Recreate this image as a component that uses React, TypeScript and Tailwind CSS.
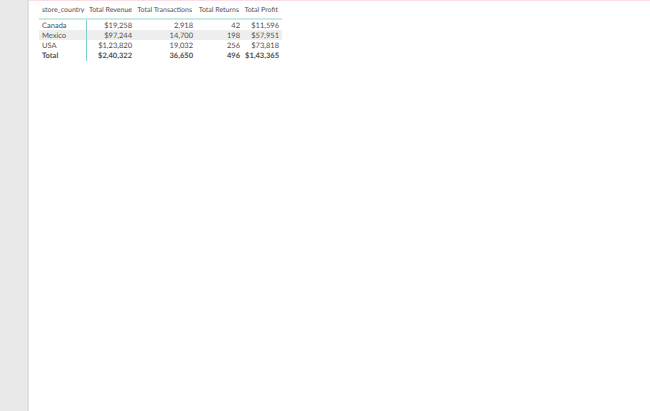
const rows = [
  { country: "Canada", revenue: "$19,258", transactions: "2,918", returns: "42", profit: "$11,596" },
  { country: "Mexico", revenue: "$97,244", transactions: "14,700", returns: "198", profit: "$57,951" },
  { country: "USA", revenue: "$1,23,820", transactions: "19,032", returns: "256", profit: "$73,818" },
];

const colsClass = "grid grid-cols-[48px_49px_60px_47px_39px]";

const App = () => {
  return (
    <div className="flex h-[411px] w-[650px] overflow-hidden bg-white font-['Lato',sans-serif] text-[7.5px] text-[#505050] [text-rendering:geometricPrecision]">
      <div className="h-full w-[29px] shrink-0 border-r-2 border-r-[#e0e0e0] bg-[#e9e9e9]" />
      <div className="flex-1">
        <div className="h-px bg-[#fbdde6]" />
        <div className="ml-[10px] mt-[3px] w-[243px]">
          <div className={`${colsClass} h-[14px] items-center whitespace-nowrap border-b-2 border-b-[#c9ebe6] box-content text-[7px]`}>
            <div className="mb-[1px] pl-[3px]">store_country</div>
            <div className="mb-[1px] pr-[4px] text-right">Total Revenue</div>
            <div className="mb-[1px] pr-[4px] text-right">Total Transactions</div>
            <div className="mb-[1px] pr-[4px] text-right">Total Returns</div>
            <div className="mb-[1px] pr-[4px] text-right">Total Profit</div>
          </div>
          {rows.map((row) => (
            <div
              key={row.country}
              className={`${colsClass} h-[10px] items-center ${row.country === "Mexico" ? "bg-[#eeeeee]" : ""}`}
            >
              <div className="flex h-full items-center border-r border-r-[#7fd0c8] pl-[3px]">{row.country}</div>
              <div className="pr-[4px] text-right">{row.revenue}</div>
              <div className="pr-[3px] text-right">{row.transactions}</div>
              <div className="pr-[3px] text-right">{row.returns}</div>
              <div className="pr-[3px] text-right">{row.profit}</div>
            </div>
          ))}
          <div className={`${colsClass} h-[10px] items-center font-bold`}>
            <div className="flex h-full items-center border-r border-r-[#7fd0c8] pl-[3px]">Total</div>
            <div className="pr-[4px] text-right">$2,40,322</div>
            <div className="pr-[3px] text-right">36,650</div>
            <div className="pr-[3px] text-right">496</div>
            <div className="pr-[3px] text-right">$1,43,365</div>
          </div>
        </div>
      </div>
    </div>
  );
};

export default App;
